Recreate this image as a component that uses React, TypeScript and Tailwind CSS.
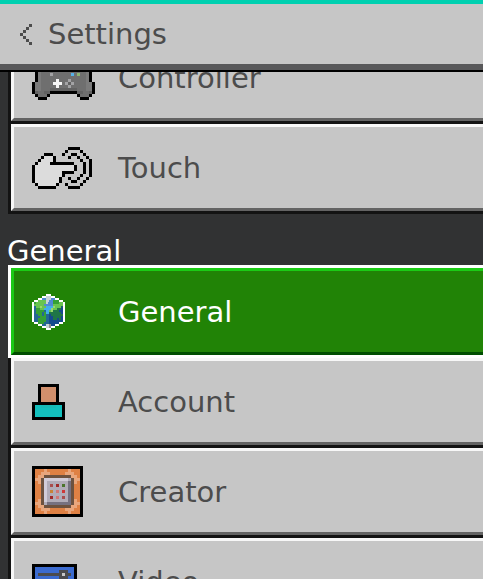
import { useState } from 'react';
import { clsx } from 'clsx';

type Sprite = {
  rows: string[];
  colors: Record<string, string>;
};

const CHEVRON: Sprite = {
  rows: ['...K', '..K.', '.K..', 'K...', '.K..', '..K.', '...K'],
  colors: { K: '#4c4c4c' },
};

const CONTROLLER: Sprite = {
  rows: [
    '.....KKK.....KKK.....',
    '...KKgggKKKKKgggKK...',
    '..KlggggggggggggglK..',
    '.KlggggggggggggggglK.',
    '.KlggggggggggggggglK.',
    '.KlggggggggggggggglK.',
    '.KlgggaggggggbgngglK.',
    '.KlggggggggggggggglK.',
    '.KlgggggWgggaggggglK.',
    'KllggggWWWgadaggggllK',
    'KllgggggWgggagggggllK',
    'KllgggdddddddddgggllK',
    'KdggddKKKKKKKKKddggdK',
    '.KgggK.........KgggK.',
    '..KKK...........KKK..',
  ],
  colors: {
    K: '#000000', g: '#6f6f6f', l: '#7b7b7b', d: '#626262',
    a: '#a3a3a5', W: '#f5f5f5', b: '#55b2e8', n: '#8db572',
  },
};

const TOUCH: Sprite = {
  rows: [
    '............KKKK....',
    '...........K....K...',
    '....KKK...K..KK..K..',
    '...KwwwK....K..K..K.',
    '..KwwwwK........K..K',
    '.KwwwwKKKKKKKK...K.K',
    'KwwwwwwwwwwwwwK..K.K',
    'KwwwwwwwwwwwwwK..K.K',
    'KwwwwwwwwwKKKK...K.K',
    'KwwwwwwwwwK.....K..K',
    'KwwwwwwwwK..K..K..K.',
    'KwwwwwwwwK...KK..K..',
    '.KwwwwwwK..K....K...',
    '..KKKKKK....KKKK....',
  ],
  colors: { K: '#000000', w: '#dcdcdc' },
};

const GLOBE: Sprite = {
  rows: [
    '.......WWW.......',
    '.....WWCCCWW.....',
    '...WWbbCCCbbWW...',
    '.WWGGGGCCbbgggWW.',
    'WgGGGGGCbbbgggGGW',
    'WGGGGGbbbbbGGGGGW',
    'WtGGLGGccccLGGGdW',
    'WtggGGccccLGGeeDW',
    'WtggggtccGLeeeDDW',
    'WtgggtgcceeeeeeDW',
    'WttggtgttDeeeeeeW',
    'WtttgggttDDeeeeDW',
    'WttggggttDDeeDeDW',
    'WttggggttDDDDDDDW',
    '.WWgggtttDDDDDWW.',
    '...WWttCCsDDWW...',
    '.....WWCCsWW.....',
    '.......WWW.......',
  ],
  colors: {
    W: '#ffffff', C: '#c8d2d8', b: '#5089d2', c: '#42aeea', G: '#68c44f', L: '#9bd86c',
    g: '#35a035', e: '#1f7547', t: '#236793', d: '#1d5c72', D: '#164a8d', s: '#8b8b8f',
  },
};

const ACCOUNT: Sprite = {
  rows: [
    '..KKKKKKK..',
    '..KsssssK..',
    '..KsssssK..',
    '..KsssssK..',
    '..KsssssK..',
    '..KsssssK..',
    'KKKKKKKKKKK',
    'KttuuuuuttK',
    'KtttttttttK',
    'KtttttttttK',
    'KtttttttttK',
    'KKKKKKKKKKK',
  ],
  colors: { K: '#000000', s: '#d18f6c', t: '#13bfbd', u: '#18b9b5' },
};

const CREATOR: Sprite = {
  rows: [
    'KKKKKKKKKKKKKKKKK',
    'KoooqoooooooqoooK',
    'KooqqqoooooqqqooK',
    'KoqqBBBBBBBBBqqoK',
    'KqqBllllllllmBqqK',
    'KoqBlmmmmmmmdBqoK',
    'KooBlm1m2m3mdBooK',
    'KooBlmmmmmmmdBooK',
    'KooBlm4m5m6mdBooK',
    'KooBlmmmmmmmdBooK',
    'KooBlm2m5m1mdBooK',
    'KoqBlmmmmmmmdBqoK',
    'KqqBmddddddddBqqK',
    'KoqqBBBBBBBBBqqoK',
    'KooqqqoooooqqqooK',
    'KoooqoooooooqoooK',
    'KKKKKKKKKKKKKKKKK',
  ],
  colors: {
    K: '#000000', o: '#df8144', q: '#e9a67c', B: '#6d523f', l: '#d1ccd8', m: '#b1acb8', d: '#767180',
    1: '#a94d4d', 2: '#a12a2a', 3: '#4b742c', 4: '#c78338', 5: '#d07776', 6: '#ce3838',
  },
};

const VIDEO: Sprite = {
  rows: [
    'KKKKKKKKKKKKKKK',
    'KbbbbbbbbbbbbbK',
    'KbbbbbbbbdddbbK',
    'KbddddddddwddbK',
    'KbbbbbbbbdddbbK',
    'KbbbbbbbbbbbbbK',
    'KbbdddbbbbbbbbK',
    'KbddwddddddddbK',
    'KbbdddbbbbbbbbK',
    'KbbbbbbbbbbbbbK',
    'KbbbbbbbbbbbbbK',
    'KKKKKKKKKKKKKKK',
  ],
  colors: { K: '#000000', b: '#3b6bd0', d: '#4b4b4d', w: '#c6c6c6' },
};

const GROUPS = [
  {
    title: 'Controls',
    items: [
      { name: 'Controller', icon: CONTROLLER, size: 'w-[63px]' },
      { name: 'Touch', icon: TOUCH, size: 'w-[60px]' },
    ],
  },
  {
    title: 'General',
    items: [
      { name: 'General', icon: GLOBE, size: 'w-[33px] h-9' },
      { name: 'Account', icon: ACCOUNT, size: 'w-[33px]' },
      { name: 'Creator', icon: CREATOR, size: 'w-[51px]' },
      { name: 'Video', icon: VIDEO, size: 'w-[45px]' },
    ],
  },
];

function PixelIcon({ sprite, className }: { sprite: Sprite; className: string }) {
  return (
    <svg
      className={className}
      viewBox={`0 0 ${sprite.rows[0].length} ${sprite.rows.length}`}
      preserveAspectRatio="none"
      shapeRendering="crispEdges"
      aria-hidden="true"
    >
      {sprite.rows.map((row, y) =>
        row.split('').map((key, x) =>
          key === '.' ? null : (
            <rect key={`${x}-${y}`} x={x} y={y} width="1" height="1" fill={sprite.colors[key]} />
          )
        )
      )}
    </svg>
  );
}

export default function App() {
  const [selected, setSelected] = useState('General');

  return (
    <div className="flex h-screen flex-col overflow-hidden bg-[#313233] font-['DejaVu_Sans',sans-serif] text-[29px] leading-7 text-[#4c4c4c]">
      {/* Title bar */}
      <header className="relative z-20 shrink-0 border-t-4 border-[#00d0b0] bg-[#c6c6c6]">
        <button type="button" className="flex h-[60px] items-center gap-4 pl-5">
          <PixelIcon sprite={CHEVRON} className="h-[21px] w-3" />
          <span>Settings</span>
        </button>
        <div className="h-2 border-b-2 border-black bg-[#58585a]" />
      </header>

      {/* Section list, scrolled part of the way into the controls group */}
      <main className="min-h-0 flex-1 overflow-hidden">
        <div className="-mt-[41px]">
          {GROUPS.map((group, index) => (
            <section key={group.title}>
              {index > 0 && <h2 className="pt-[23px] pb-[3px] pl-[7px] text-white">{group.title}</h2>}
              <ul className="pl-2">
                {group.items.map((item) => {
                  const active = item.name === selected;
                  return (
                    <li
                      key={item.name}
                      className={clsx(
                        '-mt-[3px] border-y-3 border-l-3',
                        active ? 'relative z-10 border-white' : 'border-[#131313]'
                      )}
                    >
                      <button
                        type="button"
                        onClick={() => setSelected(item.name)}
                        className={clsx(
                          'flex h-[87px] w-full items-center border-y-3 border-l-3 pl-[18px] text-left',
                          active
                            ? 'border-t-[#1bcb15] border-b-[#004d00] border-l-[#1bcb15] bg-[#218306] text-white'
                            : 'border-t-[#f7f7f7] border-b-[#636363] border-l-[#f7f7f7] bg-[#c6c6c6]'
                        )}
                      >
                        <span className="flex w-[86px] shrink-0 items-center">
                          <PixelIcon sprite={item.icon} className={item.size} />
                        </span>
                        <span>{item.name}</span>
                      </button>
                    </li>
                  );
                })}
              </ul>
            </section>
          ))}
        </div>
      </main>
    </div>
  );
}
